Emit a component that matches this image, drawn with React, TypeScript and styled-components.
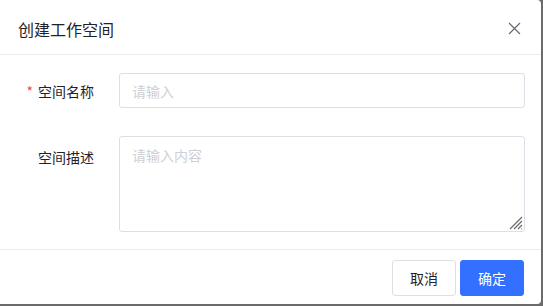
import styled, { createGlobalStyle } from 'styled-components';

const GlobalStyle = createGlobalStyle`
  html, body {
    margin: 0;
    padding: 0;
    background: #6b6b6b;
  }
  body {
    font-family: "Noto Sans CJK SC", "Noto Sans", sans-serif;
  }
`;

const Dialog = styled.div`
  width: 541px;
  height: 304px;
  background: #ffffff;
  border-radius: 0 4px 4px 0;
  display: flex;
  flex-direction: column;
  box-sizing: border-box;
`;

const Header = styled.div`
  height: 54px;
  padding: 0 18px;
  display: flex;
  align-items: center;
  justify-content: space-between;
  border-bottom: 1px solid #ebebeb;
  flex-shrink: 0;
`;

const Title = styled.div`
  font-size: 16px;
  color: #1f2329;
  line-height: 22px;
  margin-top: 4px;
`;

const CloseBtn = styled.button`
  width: 16px;
  height: 16px;
  padding: 0;
  margin-top: 3px;
  margin-right: 1px;
  border: none;
  background: none;
  display: flex;
  align-items: center;
  justify-content: center;
  cursor: pointer;
`;

const Body = styled.div`
  flex: 1;
  padding: 18px 16px 0 18px;
  display: flex;
  flex-direction: column;
  gap: 28px;
`;

const Row = styled.div<{ $top?: boolean }>`
  display: flex;
  align-items: ${(p) => (p.$top ? 'flex-start' : 'center')};
`;

const Label = styled.label<{ $top?: boolean }>`
  width: 101px;
  flex-shrink: 0;
  box-sizing: border-box;
  padding-right: 25px;
  text-align: right;
  font-size: 14px;
  color: #1f2329;
  line-height: 20px;
  padding-top: ${(p) => (p.$top ? '11px' : '0')};
`;

const Required = styled.span`
  color: #f54a45;
  margin-right: 5px;
`;

const Input = styled.input`
  flex: 1;
  height: 35px;
  box-sizing: border-box;
  border: 1px solid #dcdfe6;
  border-radius: 3px;
  padding: 0 12px;
  font-family: inherit;
  font-size: 14px;
  color: #1f2329;
  outline: none;
  &::placeholder {
    color: #cdd0d6;
  }
`;

const AreaWrap = styled.div`
  flex: 1;
  position: relative;
  display: flex;
`;

const TextArea = styled.textarea`
  flex: 1;
  height: 96px;
  box-sizing: border-box;
  border: 1px solid #dcdfe6;
  border-radius: 3px;
  padding: 8px 12px;
  font-family: inherit;
  font-size: 14px;
  line-height: 20px;
  color: #1f2329;
  outline: none;
  resize: none;
  &::placeholder {
    color: #cdd0d6;
  }
`;

const Grip = styled.svg`
  position: absolute;
  right: 2px;
  bottom: 2px;
  pointer-events: none;
`;

const Footer = styled.div`
  height: 54px;
  flex-shrink: 0;
  border-top: 1px solid #ebebeb;
  padding: 0 17px 0 0;
  display: flex;
  align-items: center;
  justify-content: flex-end;
  gap: 4px;
`;

const Button = styled.button<{ $primary?: boolean }>`
  width: 64px;
  height: 36px;
  border-radius: 3px;
  font-family: inherit;
  font-size: 14px;
  cursor: pointer;
  border: 1px solid ${(p) => (p.$primary ? '#3370ff' : '#dcdfe6')};
  background: ${(p) => (p.$primary ? '#3370ff' : '#ffffff')};
  color: ${(p) => (p.$primary ? '#ffffff' : '#1f2329')};
  margin-top: 1px;
`;

export default function App() {
  return (
    <>
      <GlobalStyle />
      <Dialog>
        <Header>
          <Title>创建工作空间</Title>
          <CloseBtn aria-label="关闭">
            <svg width="13" height="13" viewBox="0 0 13 13">
              <path d="M1 1L12 12M12 1L1 12" stroke="#646a73" strokeWidth="1.2" fill="none" />
            </svg>
          </CloseBtn>
        </Header>
        <Body>
          <Row>
            <Label>
              <Required>*</Required>空间名称
            </Label>
            <Input placeholder="请输入" />
          </Row>
          <Row $top>
            <Label $top>空间描述</Label>
            <AreaWrap>
              <TextArea placeholder="请输入内容" />
              <Grip width="16" height="16" viewBox="0 0 16 16">
                <path
                  d="M15 3L3 15M15 7L7 15M15 11L11 15M15 14.5L14.5 15"
                  stroke="#6b6b6b"
                  strokeWidth="1.2"
                  fill="none"
                />
              </Grip>
            </AreaWrap>
          </Row>
        </Body>
        <Footer>
          <Button>取消</Button>
          <Button $primary>确定</Button>
        </Footer>
      </Dialog>
    </>
  );
}
